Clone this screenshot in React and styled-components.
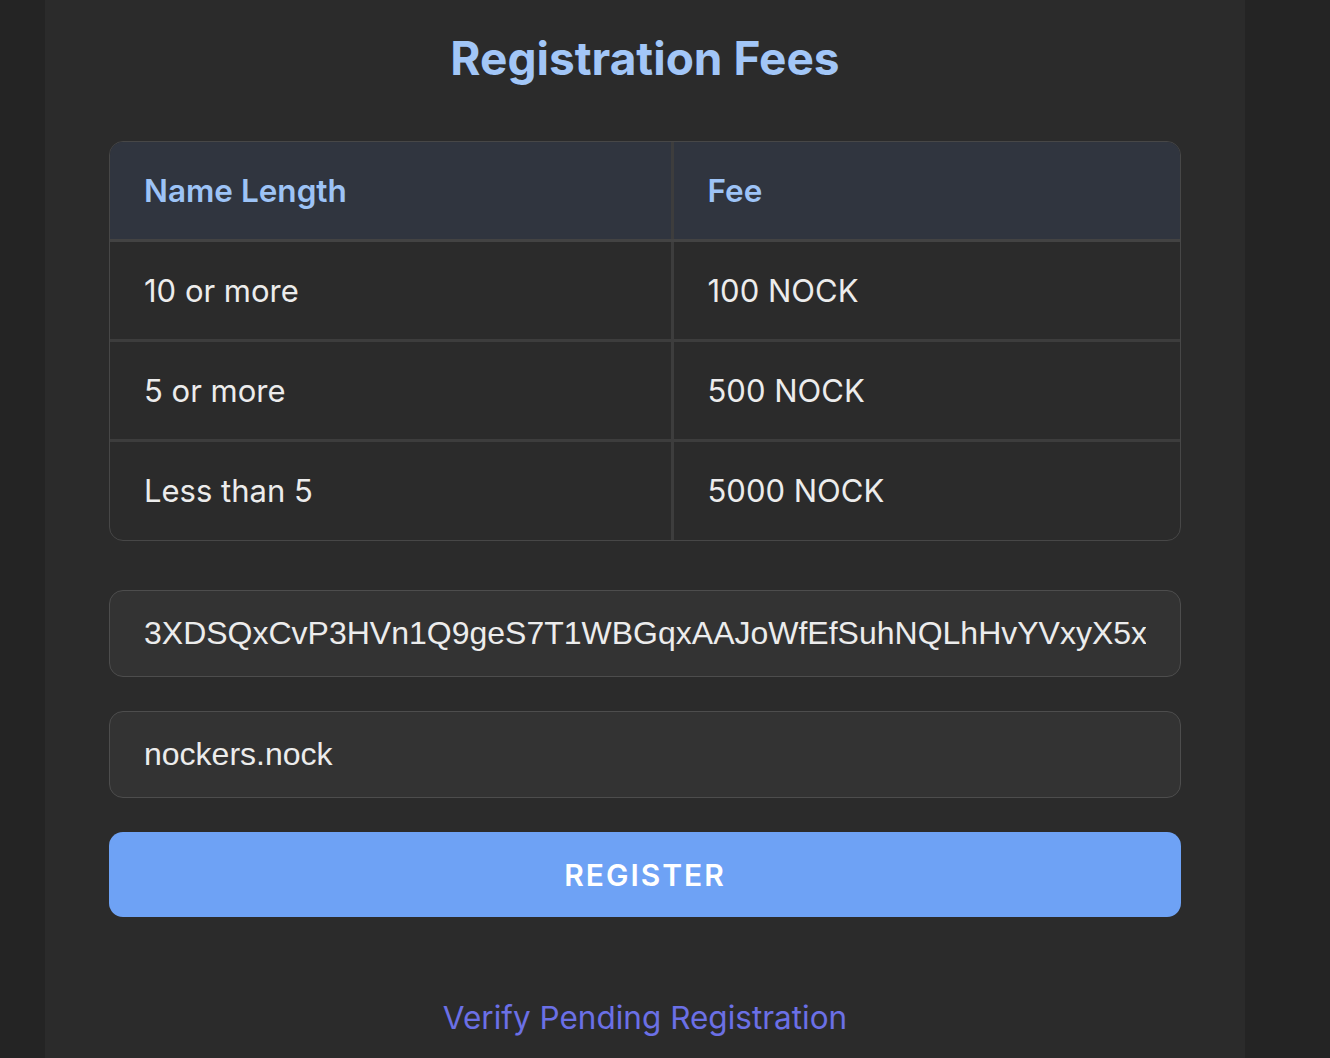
import React, { useState } from "react";
import styled, { createGlobalStyle } from "styled-components";

const fees = [
  { length: "10 or more", fee: "100 NOCK" },
  { length: "5 or more", fee: "500 NOCK" },
  { length: "Less than 5", fee: "5000 NOCK" },
];

export default function App() {
  const [address, setAddress] = useState(
    "3XDSQxCvP3HVn1Q9geS7T1WBGqxAAJoWfEfSuhNQLhHvYVxyX5x"
  );
  const [name, setName] = useState("nockers.nock");

  return (
    <>
      <GlobalStyle />
      <Page>
        <Panel>
          <Title>Registration Fees</Title>
          <TableWrap>
            <FeeTable>
              <thead>
                <tr>
                  <HeadCell>Name Length</HeadCell>
                  <HeadCell>Fee</HeadCell>
                </tr>
              </thead>
              <tbody>
                {fees.map((row) => (
                  <tr key={row.length}>
                    <Cell>{row.length}</Cell>
                    <Cell>{row.fee}</Cell>
                  </tr>
                ))}
              </tbody>
            </FeeTable>
          </TableWrap>
          <Form>
            <Input value={address} onChange={(e) => setAddress(e.target.value)} />
            <Input value={name} onChange={(e) => setName(e.target.value)} />
            <RegisterButton>REGISTER</RegisterButton>
          </Form>
          <VerifyLink href="#">Verify Pending Registration</VerifyLink>
        </Panel>
      </Page>
    </>
  );
}

const GlobalStyle = createGlobalStyle`
  html, body {
    margin: 0;
    padding: 0;
    background: #242424;
    font-family: "Inter", "Liberation Sans", sans-serif;
  }
`;

const Page = styled.div`
  display: flex;
  padding-left: 45px;
  min-height: 100vh;
  background: #242424;
`;

const Panel = styled.div`
  width: 1200px;
  background: #2b2b2b;
  padding: 30px 64px 0;
  box-sizing: border-box;
  display: flex;
  flex-direction: column;
  align-items: stretch;
`;

const Title = styled.h1`
  margin: 0 0 55px;
  text-align: center;
  font-size: 46px;
  font-weight: 700;
  line-height: 56px;
  color: #a2c6f7;
`;

const TableWrap = styled.div`
  border: 1px solid #474747;
  border-radius: 14px;
  overflow: hidden;
  width: 1072px;
  box-sizing: border-box;
`;

const FeeTable = styled.table`
  width: 100%;
  border-collapse: collapse;
  table-layout: fixed;

  th,
  td {
    box-sizing: border-box;
  }

  th:first-child,
  td:first-child {
    width: 562px;
  }
`;

const HeadCell = styled.th`
  height: 98px;
  padding: 0 34px;
  text-align: left;
  background: #30353f;
  color: #9dc3f6;
  font-size: 31.5px;
  font-weight: 600;
  border-bottom: 3px solid #434343;
  border-right: 3px solid #3d3d3d;
  &:last-child {
    border-right: none;
  }
`;

const Cell = styled.td`
  height: 100px;
  padding: 0 34px;
  color: #ececec;
  font-size: 31px;
  font-weight: 400;
  border-bottom: 3px solid #3d3d3d;
  border-right: 3px solid #3d3d3d;
  &:last-child {
    border-right: none;
  }
  tr:last-child > & {
    border-bottom: none;
  }
`;

const Form = styled.div`
  margin-top: 49px;
  display: flex;
  flex-direction: column;
  gap: 34px;
  width: 1072px;
`;

const Input = styled.input`
  height: 87px;
  box-sizing: border-box;
  padding: 0 34px;
  background: #333333;
  border: 1.5px solid #4d4d4d;
  border-radius: 14px;
  color: #ececec;
  font-family: "Liberation Sans", Arial, sans-serif;
  font-size: 32px;
  outline: none;
`;

const RegisterButton = styled.button`
  height: 85px;
  border: none;
  border-radius: 14px;
  background: #6ea2f5;
  color: #ffffff;
  font-family: "Inter", sans-serif;
  font-size: 30px;
  font-weight: 600;
  letter-spacing: 2px;
  cursor: pointer;
`;

const VerifyLink = styled.a`
  margin-top: 81px;
  align-self: center;
  color: #6b70e6;
  font-size: 31.5px;
  text-decoration: none;
  line-height: 40px;
`;
